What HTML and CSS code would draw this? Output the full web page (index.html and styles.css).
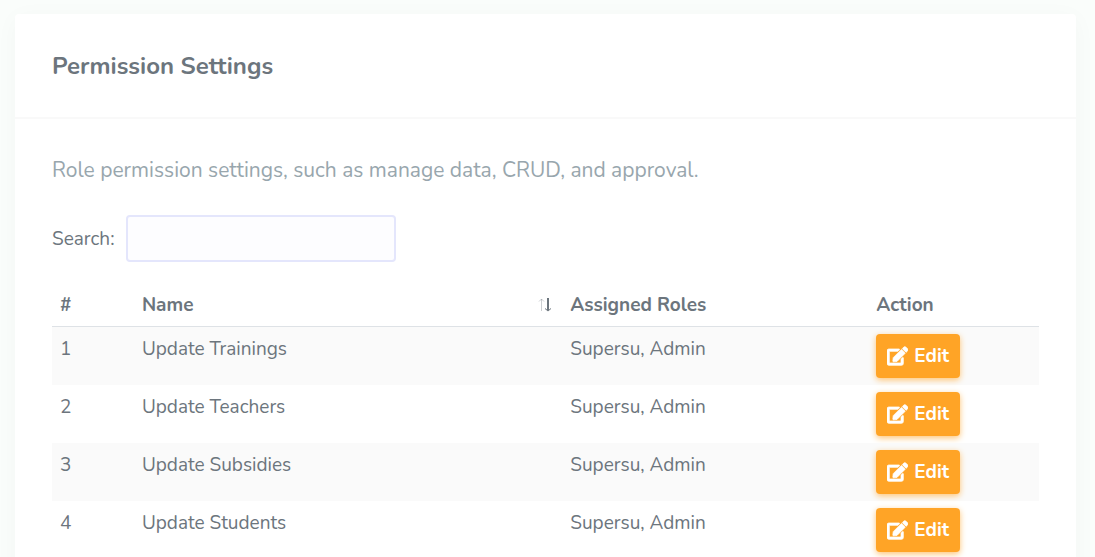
FILE: index.html
```html
<!DOCTYPE html>
<html lang="en">
<head>
<meta charset="utf-8">
<meta name="viewport" content="width=device-width, initial-scale=1">
<title>Permission Settings</title>
<link rel="stylesheet" href="styles.css">
</head>
<body>
<svg class="sprite" aria-hidden="true">
  <symbol id="icon-edit" viewBox="0 0 576 512">
    <path fill="currentColor" stroke="currentColor" stroke-width="20" d="M402.600 83.200l90.200 90.200c3.800 3.800 3.800 10 0 13.800L274.400 405.600l-92.800 10.300c-12.400 1.400-22.900-9.100-21.500-21.500l10.300-92.800L388.800 83.200c3.800-3.800 10-3.800 13.800 0zm162-22.900l-48.800-48.800c-15.200-15.200-39.900-15.200-55.200 0l-35.400 35.400c-3.800 3.800-3.800 10 0 13.800l90.200 90.200c3.800 3.800 10 3.800 13.800 0l35.400-35.400c15.200-15.300 15.200-40 0-55.200zM384 346.200V448H64V128h229.800c3.200 0 6.200-1.300 8.500-3.500l40-40c7.600-7.600 2.200-20.500-8.500-20.500H48C21.500 64 0 85.500 0 112v352c0 26.500 21.500 48 48 48h352c26.500 0 48-21.500 48-48V306.200c0-10.700-12.900-16-20.500-8.500l-40 40c-2.200 2.300-3.500 5.300-3.500 8.500z"/>
  </symbol>
</svg>
<main class="card">
  <header class="card-header">
    <h1 class="card-title">Permission Settings</h1>
  </header>
  <div class="card-body">
    <p class="lead">Role permission settings, such as manage data, CRUD, and approval.</p>
    <div class="search">
      <label for="search">Search:</label>
      <input class="search-input" id="search" type="search">
    </div>
    <table class="table">
      <thead>
        <tr>
          <th class="col-id" scope="col">#</th>
          <th class="col-name" scope="col" aria-sort="descending">
            <div class="sortable">Name
              <svg class="sort-icon" viewBox="0 0 16 14" aria-hidden="true">
                <path class="sort-up" d="M3.500 13V1M1 3.500L3.500 1L6 3.500"/>
                <path class="sort-down" d="M10 0V12"/>
                <path d="M7 10.500L10 13L13 10.500"/>
              </svg>
            </div>
          </th>
          <th class="col-roles" scope="col">Assigned Roles</th>
          <th class="col-action" scope="col">Action</th>
        </tr>
      </thead>
      <tbody>
        <tr><td>1</td><td>Update Trainings</td><td>Supersu, Admin</td><td><button class="btn" type="button"><svg class="btn-icon" aria-hidden="true"><use href="#icon-edit"/></svg>Edit</button></td></tr>
        <tr><td>2</td><td>Update Teachers</td><td>Supersu, Admin</td><td><button class="btn" type="button"><svg class="btn-icon" aria-hidden="true"><use href="#icon-edit"/></svg>Edit</button></td></tr>
        <tr><td>3</td><td>Update Subsidies</td><td>Supersu, Admin</td><td><button class="btn" type="button"><svg class="btn-icon" aria-hidden="true"><use href="#icon-edit"/></svg>Edit</button></td></tr>
        <tr><td>4</td><td>Update Students</td><td>Supersu, Admin</td><td><button class="btn" type="button"><svg class="btn-icon" aria-hidden="true"><use href="#icon-edit"/></svg>Edit</button></td></tr>
      </tbody>
    </table>
  </div>
</main>
</body>
</html>
```
FILE: styles.css
```css
* {
  box-sizing: border-box;
}

body {
  margin: 0;
  padding: 14px 19px 14px 15px;
  background: #fafdfb;
  color: #6c757d;
  font-family: Nunito, Lato, sans-serif;
  font-size: 19px;
  line-height: 28px;
}

.sprite {
  display: none;
}

.card {
  background: #fff;
  border-radius: 4px;
  box-shadow: 0 4px 24px rgba(0, 0, 0, 0.03);
}

.card-header {
  padding: 37px 37px 35px;
  border-bottom: 2px solid #f9f9f9;
}

.card-title {
  margin: 0;
  font-size: 24px;
  line-height: 31px;
  font-weight: 700;
}

.card-body {
  padding: 37px;
}

.lead {
  margin: 0 0 31px;
  color: #98a6ad;
  font-size: 21px;
}

.search {
  display: flex;
  align-items: center;
  gap: 12px;
  margin-bottom: 20px;
}

.search-input {
  width: 270px;
  height: 47px;
  padding: 8px 12px;
  border: 2px solid #e4e6fc;
  border-radius: 4px;
  background: #fdfdff;
  color: inherit;
  font: inherit;
}

.table {
  width: 100%;
  table-layout: fixed;
  border-collapse: separate;
  border-spacing: 0;
}

.table th,
.table td {
  padding: 8px;
  text-align: left;
  vertical-align: top;
}

.table td {
  padding-bottom: 7px;
}

.table td:last-child {
  padding-top: 7px;
}

.table th {
  padding: 9px 8px 7px;
  border-bottom: 1px solid #dee2e6;
  font-weight: 700;
}

.table tbody tr:nth-child(odd) {
  background: #fafafa;
}

.col-id {
  width: 8.3%;
}

.col-name {
  width: 43.4%;
}

.col-roles {
  width: 31%;
}

.sortable {
  display: flex;
  align-items: center;
  justify-content: space-between;
}

.sort-icon {
  width: 16px;
  height: 14px;
  fill: none;
  stroke: #6c757d;
}

.sort-up {
  opacity: 0.35;
}

.sort-down {
  stroke-width: 2px;
}

.btn {
  display: flex;
  align-items: center;
  gap: 6px;
  height: 44px;
  padding: 0 11px;
  border: 0;
  border-radius: 4px;
  background: #ffa426;
  box-shadow: 0 2px 6px #ffc473;
  color: #fff;
  font: inherit;
  font-weight: 700;
}

.btn-icon {
  width: 21px;
  height: 20px;
  overflow: visible;
}
```
